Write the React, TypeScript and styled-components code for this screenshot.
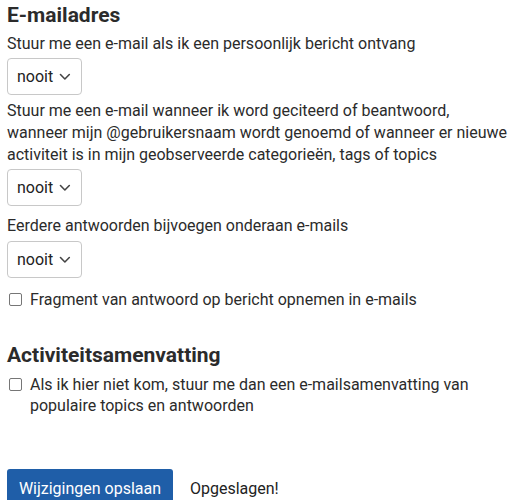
import React from "react";
import styled, { createGlobalStyle } from "styled-components";

const Global = createGlobalStyle`
  html, body { margin: 0; padding: 0; background: #fff; }
  body { font-family: Roboto, "Liberation Sans", sans-serif; color: #222; }
`;

const Page = styled.div`
  padding: 2px 7px 0 7px;
  width: 528px;
  box-sizing: border-box;
`;

const Heading = styled.h2<{ $top?: number }>`
  margin: ${(p) => p.$top ?? 0}px 0 0 0;
  font-size: 21px;
  line-height: 26px;
  font-weight: 700;
  color: #2b2b2b;
`;

const Label = styled.div<{ $top?: number }>`
  font-size: 16px;
  line-height: 22px;
  color: #2b2b2b;
  margin-top: ${(p) => p.$top ?? 5}px;
`;

const SelectRow = styled.div<{ $top?: number }>`
  display: flex;
  margin-top: ${(p) => p.$top ?? 3}px;
`;

const SelectBox = styled.div`
  display: flex;
  align-items: center;
  gap: 6px;
  height: 37px;
  width: 75px;
  box-sizing: border-box;
  padding: 0 10px 0 9px;
  border: 1px solid #c8c8c8;
  border-radius: 4px;
  font-size: 16px;
  color: #222;
  background: #fff;
`;

const CheckRow = styled.label<{ $top?: number }>`
  display: flex;
  align-items: flex-start;
  gap: 8px;
  margin-top: ${(p) => p.$top ?? 0}px;
  font-size: 16px;
  line-height: 21px;
  color: #2b2b2b;
`;

const Box = styled.span`
  flex: none;
  width: 13px;
  height: 13px;
  margin: 4px 0 0 2px;
  border: 1px solid #767676;
  border-radius: 2px;
  box-sizing: border-box;
`;

const Actions = styled.div`
  display: flex;
  align-items: center;
  gap: 17px;
  margin-top: 53px;
`;

const SaveButton = styled.button`
  font-family: inherit;
  font-size: 16px;
  color: #fff;
  background: #1f5ea8;
  border: none;
  border-radius: 3px;
  height: 38px;
  width: 166px;
  padding: 0;
`;

const Saved = styled.span`
  font-size: 16px;
  color: #222;
`;

const Chevron = () => (
  <svg width="12" height="8" viewBox="0 0 12 8" fill="none">
    <path d="M1.5 1.5L6 6L10.5 1.5" stroke="#444" strokeWidth="1.6" strokeLinecap="round" strokeLinejoin="round" />
  </svg>
);

const Select = ({ top }: { top?: number }) => (
  <SelectRow $top={top}>
    <SelectBox>
      nooit
      <Chevron />
    </SelectBox>
  </SelectRow>
);

export default function App() {
  return (
    <Page>
      <Global />
      <Heading>E-mailadres</Heading>
      <Label>Stuur me een e-mail als ik een persoonlijk bericht ontvang</Label>
      <Select />
      <Label>
        Stuur me een e-mail wanneer ik word geciteerd of beantwoord,
        <br />
        wanneer mijn @gebruikersnaam wordt genoemd of wanneer er nieuwe
        <br />
        activiteit is in mijn geobserveerde categorieën, tags of topics
      </Label>
      <Select />
      <Label $top={9}>Eerdere antwoorden bijvoegen onderaan e-mails</Label>
      <Select top={4} />
      <CheckRow $top={11}>
        <Box />
        <span>Fragment van antwoord op bericht opnemen in e-mails</span>
      </CheckRow>
      <Heading $top={32}>Activiteitsamenvatting</Heading>
      <CheckRow $top={6}>
        <Box />
        <span>
          Als ik hier niet kom, stuur me dan een e-mailsamenvatting van
          <br />
          populaire topics en antwoorden
        </span>
      </CheckRow>
      <Actions>
        <SaveButton>Wijzigingen opslaan</SaveButton>
        <Saved>Opgeslagen!</Saved>
      </Actions>
    </Page>
  );
}
